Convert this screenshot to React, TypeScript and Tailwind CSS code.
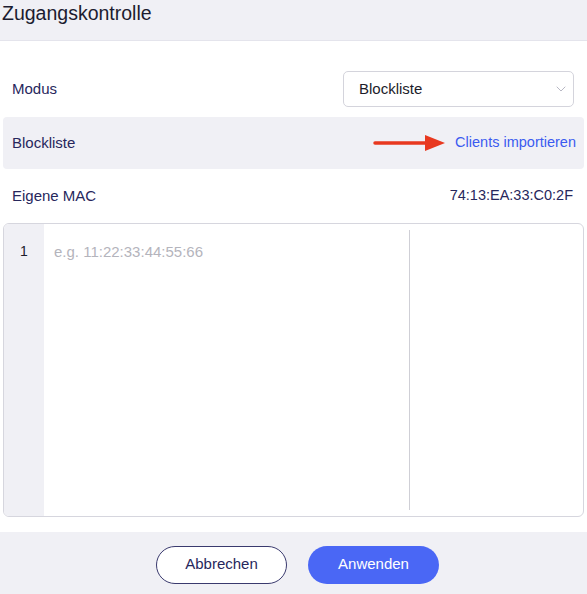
import { ChevronDown } from "lucide-react"

export default function App() {
  return (
    <div className="flex h-[594px] w-[587px] flex-col bg-white font-['Liberation_Sans',Arial,sans-serif] text-[#27275c]">
      <div className="h-[41px] border-b border-[#e4e4ec] bg-[#f0f0f5] pl-[2px] pt-[1px] text-[19.5px] leading-[24px] text-[#1c1c30]">
        Zugangskontrolle
      </div>

      <div className="flex flex-1 flex-col px-[3px]">
        <div className="mt-[30px] flex h-[36px] items-center justify-between pl-[9px] pr-[10px]">
          <span className="text-[15px]">Modus</span>
          <div className="flex h-[36px] w-[231px] items-center justify-between rounded-[5px] border border-[#d4d4dc] bg-white pl-[15px] pr-[4px]">
            <span className="text-[15px] text-[#1c1c2a]">Blockliste</span>
            <ChevronDown className="h-[16px] w-[16px] text-[#b8b8c4]" strokeWidth={1.5} />
          </div>
        </div>

        <div className="mt-[10px] flex h-[52px] items-center justify-between rounded-[4px] bg-[#f0f0f5] pl-[9px] pr-[8px]">
          <span className="text-[15px]">Blockliste</span>
          <div className="flex items-center gap-[8px]">
            <svg width="74" height="20" viewBox="0 0 74 20">
              <path d="M2 10 H58" stroke="#e8381f" strokeWidth="3.5" strokeLinecap="round" />
              <path d="M52 2 L72 10 L52 18 Z" fill="#e8381f" />
            </svg>
            <span className="text-[14.5px] text-[#3b5bf0]">Clients importieren</span>
          </div>
        </div>

        <div className="flex h-[54px] items-center justify-between pl-[9px] pr-[11px]">
          <span className="text-[15px]">Eigene MAC</span>
          <span className="text-[14.5px]">74:13:EA:33:C0:2F</span>
        </div>

        <div className="flex h-[294px] overflow-hidden rounded-[6px] border border-[#d6d6de]">
          <div className="w-[40px] bg-[#f0f0f5] pt-[17px] text-center text-[14px] text-[#1c1c2a]">1</div>
          <div className="flex flex-1 py-[6px]">
            <div className="w-[366px] border-r border-[#cfcfd6] pl-[10px] pt-[11px] text-[15px] text-[#b4b4bc]">
              e.g. 11:22:33:44:55:66
            </div>
          </div>
        </div>

        <div className="h-[15px]" />
      </div>

      <div className="flex h-[62px] items-center justify-center gap-[21px] bg-[#f0f0f5] pl-[8px] pt-[3px]">
        <button className="h-[38px] w-[131px] rounded-full border-[1.5px] border-[#3a3a6e] bg-white text-[15px] text-[#27275c]">
          Abbrechen
        </button>
        <button className="h-[38px] w-[131px] rounded-full bg-[#4a67f5] text-[15px] text-white">
          Anwenden
        </button>
      </div>
    </div>
  )
}
